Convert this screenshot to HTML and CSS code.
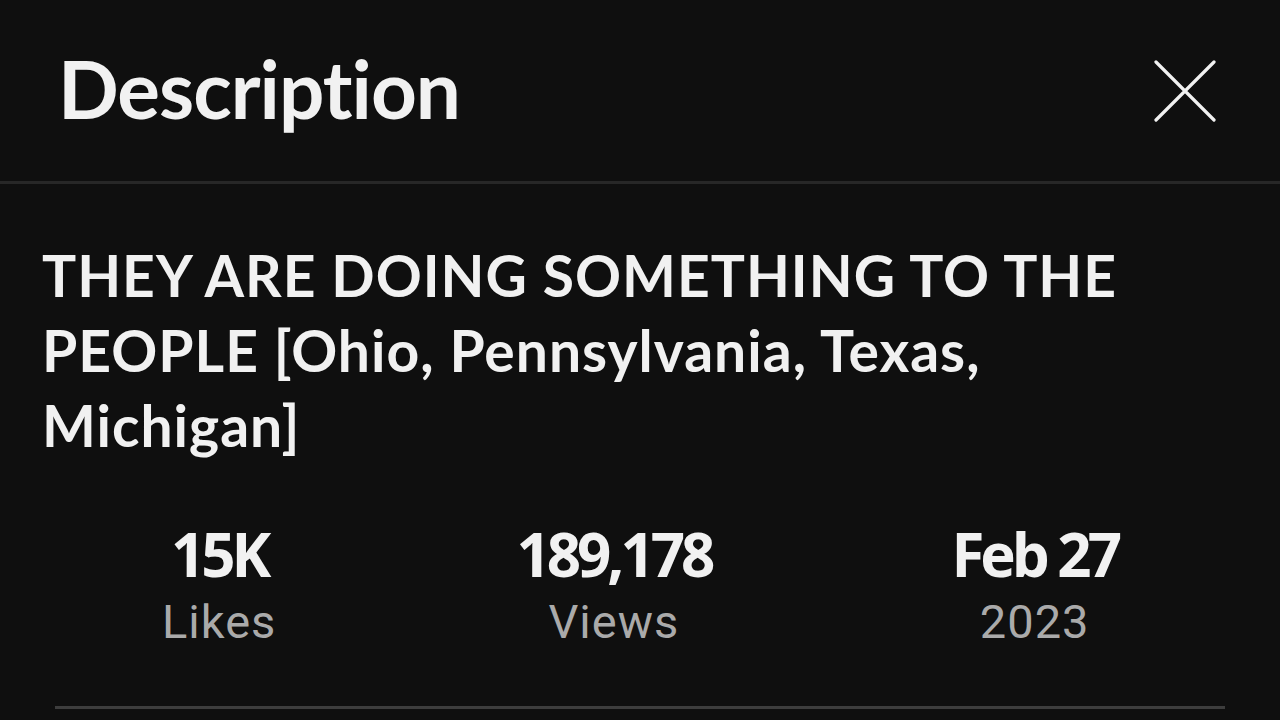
FILE: index.html
```html
<!DOCTYPE html>
<html lang="en">
<head>
  <meta charset="UTF-8">
  <title>Description</title>
  <link rel="stylesheet" href="styles.css">
</head>
<body>
  <div class="sheet">
    <div class="sheet-header">
      <h1>Description</h1>
      <button class="close" aria-label="Close">
        <svg width="62" height="62" viewBox="0 0 62 62">
          <path d="M2 2 L60 60 M60 2 L2 60" stroke="#f1f1f1" stroke-width="3.2" stroke-linecap="round" fill="none"/>
        </svg>
      </button>
    </div>

    <div class="sheet-body">
      <h2 class="video-title">THEY ARE DOING SOMETHING TO THE PEOPLE [Ohio, Pennsylvania, Texas, Michigan]</h2>

      <div class="stats">
        <div class="stat">
          <div class="stat-value">15K</div>
          <div class="stat-label">Likes</div>
        </div>
        <div class="stat">
          <div class="stat-value">189,178</div>
          <div class="stat-label">Views</div>
        </div>
        <div class="stat">
          <div class="stat-value">Feb 27</div>
          <div class="stat-label">2023</div>
        </div>
      </div>

      <div class="rule"></div>
    </div>
  </div>
</body>
</html>
```

FILE: styles.css
```css
* {
  box-sizing: border-box;
}

body {
  margin: 0;
  background: #0f0f0f;
  color: #f1f1f1;
  font-family: Lato, 'Open Sans', sans-serif;
  overflow: hidden;
}

.sheet {
  width: 1280px;
  height: 720px;
}

.sheet-header {
  display: flex;
  align-items: center;
  justify-content: space-between;
  height: 184px;
  padding: 0 64px 6px 58px;
  border-bottom: 3px solid #272727;
}

.sheet-header h1 {
  margin: 0;
  font-size: 80px;
  font-weight: 700;
  letter-spacing: -1px;
  line-height: 1;
}

.close {
  background: none;
  border: none;
  padding: 0;
  margin: 6px 0 0;
  display: flex;
  cursor: pointer;
}

.sheet-body {
  padding: 0 42px;
}

.video-title {
  margin: 0;
  padding-top: 54px;
  font-size: 57px;
  font-weight: 700;
  line-height: 75px;
  letter-spacing: 1px;
}

.stats {
  display: flex;
  justify-content: space-around;
  margin-top: 56px;
}

.stat {
  text-align: center;
}

.stat-value {
  font-family: 'Open Sans', sans-serif;
  font-size: 60px;
  font-weight: 700;
  line-height: 70px;
  letter-spacing: -4px;
}

.stat-label {
  margin-top: 5px;
  font-family: Roboto, sans-serif;
  font-size: 47px;
  line-height: 56px;
  letter-spacing: 1px;
  color: #aaaaaa;
}

.rule {
  margin: 56px 13px 0;
  height: 3px;
  background: #3d3d3d;
}
```
